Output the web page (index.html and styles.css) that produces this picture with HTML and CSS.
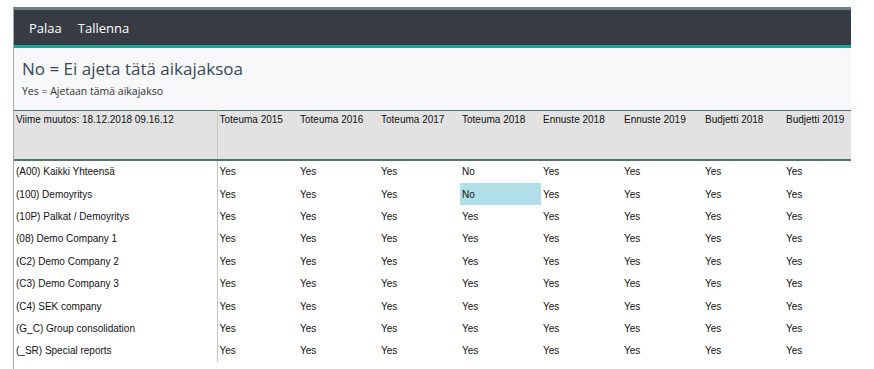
FILE: index.html
```html
<!DOCTYPE html>
<html lang="fi">
<head>
    <meta charset="UTF-8">
    <meta name="viewport" content="width=device-width, initial-scale=1.0">
    <title>Aikajaksot</title>
    <link rel="stylesheet" href="styles.css">
</head>
<body>

<div class="sivu">
    <div class="ylapalkki">
        <a href="#">Palaa</a>
        <a href="#">Tallenna</a>
    </div>

    <div class="ohje">
        <h1>No = Ei ajeta tätä aikajaksoa</h1>
        <p>Yes = Ajetaan tämä aikajakso</p>
    </div>

    <table class="jaksot">
        <thead>
            <tr>
                <th class="nimi">Viime muutos: 18.12.2018 09.16.12</th>
                <th>Toteuma 2015</th>
                <th>Toteuma 2016</th>
                <th>Toteuma 2017</th>
                <th>Toteuma 2018</th>
                <th>Ennuste 2018</th>
                <th>Ennuste 2019</th>
                <th>Budjetti 2018</th>
                <th>Budjetti 2019</th>
            </tr>
        </thead>
        <tbody>
            <tr><td class="nimi">(A00) Kaikki Yhteensä</td><td>Yes</td><td>Yes</td><td>Yes</td><td>No</td><td>Yes</td><td>Yes</td><td>Yes</td><td>Yes</td></tr>
            <tr><td class="nimi">(100) Demoyritys</td><td>Yes</td><td>Yes</td><td>Yes</td><td class="valittu">No</td><td>Yes</td><td>Yes</td><td>Yes</td><td>Yes</td></tr>
            <tr><td class="nimi">(10P) Palkat / Demoyritys</td><td>Yes</td><td>Yes</td><td>Yes</td><td>Yes</td><td>Yes</td><td>Yes</td><td>Yes</td><td>Yes</td></tr>
            <tr><td class="nimi">(08) Demo Company 1</td><td>Yes</td><td>Yes</td><td>Yes</td><td>Yes</td><td>Yes</td><td>Yes</td><td>Yes</td><td>Yes</td></tr>
            <tr><td class="nimi">(C2) Demo Company 2</td><td>Yes</td><td>Yes</td><td>Yes</td><td>Yes</td><td>Yes</td><td>Yes</td><td>Yes</td><td>Yes</td></tr>
            <tr><td class="nimi">(C3) Demo Company 3</td><td>Yes</td><td>Yes</td><td>Yes</td><td>Yes</td><td>Yes</td><td>Yes</td><td>Yes</td><td>Yes</td></tr>
            <tr><td class="nimi">(C4) SEK company</td><td>Yes</td><td>Yes</td><td>Yes</td><td>Yes</td><td>Yes</td><td>Yes</td><td>Yes</td><td>Yes</td></tr>
            <tr><td class="nimi">(G_C) Group consolidation</td><td>Yes</td><td>Yes</td><td>Yes</td><td>Yes</td><td>Yes</td><td>Yes</td><td>Yes</td><td>Yes</td></tr>
            <tr><td class="nimi">(_SR) Special reports</td><td>Yes</td><td>Yes</td><td>Yes</td><td>Yes</td><td>Yes</td><td>Yes</td><td>Yes</td><td>Yes</td></tr>
        </tbody>
    </table>
</div>

</body>
</html>
```

FILE: styles.css
```css
/* Perusasetukset */
body {
    margin: 0;
    background-color: white;
    font-family: "Open Sans", sans-serif;
}
.sivu {
    margin: 7px 0 0 13px;
    width: 838px;
    height: 362px;
    border-top: 3px solid #6f7d84;
    border-left: 1px solid #a6a8aa;
    box-sizing: border-box;
    overflow: hidden;
}
/* Yläpalkki */
.ylapalkki {
    height: 35px;
    background-color: #373b43;
    border-bottom: 3px solid #17a89a;
    display: flex;
    align-items: center;
    gap: 16px;
    padding-left: 15px;
}
.ylapalkki a {
    color: white;
    text-decoration: none;
    font-size: 13px;
}
/* Ohjeteksti */
.ohje {
    background-color: #f7f8fa;
    height: 62px;
    padding: 9px 0 0 8px;
    box-sizing: border-box;
}
.ohje h1 {
    margin: 0;
    font-size: 17px;
    font-weight: normal;
    color: #3b4856;
    line-height: 24px;
}
.ohje p {
    margin: 3px 0 0 0;
    font-size: 10.5px;
    color: #333;
}
/* Taulukko */
.jaksot {
    border-collapse: collapse;
    table-layout: fixed;
    width: 851px;
    font-family: "Liberation Sans", sans-serif;
    font-size: 10px;
    color: #111;
}
.jaksot th {
    background-color: #e2e2e2;
    border-top: 1px solid #55706f;
    border-bottom: 2px solid #55706f;
    height: 49px;
    font-weight: normal;
    text-align: left;
    vertical-align: top;
    padding: 3px 2px 0 2px;
    width: 81px;
    box-sizing: border-box;
}
.jaksot th.nimi {
    width: 203px;
    border-right: 1px solid #c4c4c4;
    padding-left: 2px;
}
.jaksot td {
    height: 22.4px;
    padding: 0 2px;
    white-space: nowrap;
}
.jaksot td.nimi {
    border-right: 1px solid #c4c4c4;
    padding-left: 2px;
}
.jaksot td.valittu {
    background-color: #b0dfe5;
}
```
